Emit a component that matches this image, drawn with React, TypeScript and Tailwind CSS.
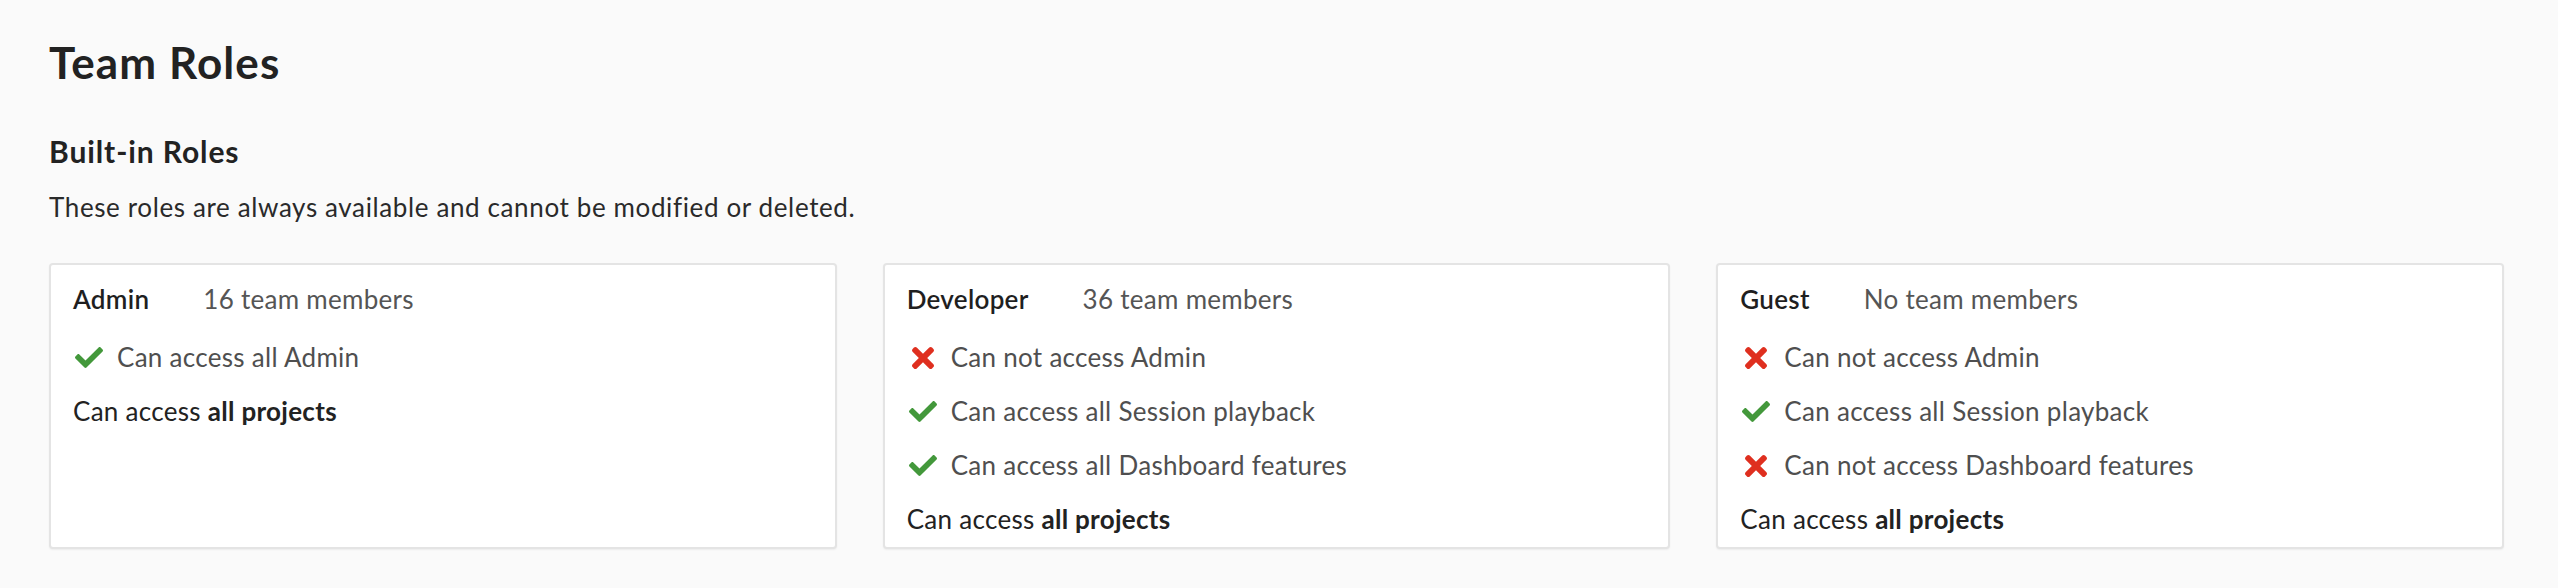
import React from "react";

type Perm = { ok: boolean; text: string };

type Role = {
	name: string;
	members: string;
	perms: Perm[];
};

const roles: Role[] = [
	{
		name: "Admin",
		members: "16 team members",
		perms: [{ ok: true, text: "Can access all Admin" }],
	},
	{
		name: "Developer",
		members: "36 team members",
		perms: [
			{ ok: false, text: "Can not access Admin" },
			{ ok: true, text: "Can access all Session playback" },
			{ ok: true, text: "Can access all Dashboard features" },
		],
	},
	{
		name: "Guest",
		members: "No team members",
		perms: [
			{ ok: false, text: "Can not access Admin" },
			{ ok: true, text: "Can access all Session playback" },
			{ ok: false, text: "Can not access Dashboard features" },
		],
	},
];

function CheckIcon() {
	return (
		<svg width="28" height="21" viewBox="0 72 512 368" className="text-[#43983b]" fill="currentColor">
			<path d="M173.898 439.404l-166.4-166.4c-9.997-9.997-9.997-26.206 0-36.204l36.203-36.204c9.997-9.998 26.207-9.998 36.204 0L192 312.69 432.095 72.596c9.997-9.997 26.207-9.997 36.204 0l36.203 36.204c9.997 9.997 9.997 26.206 0 36.204l-294.4 294.401c-9.998 9.997-26.207 9.997-36.204-.001z" />
		</svg>
	);
}

function CrossIcon() {
	return (
		<svg width="22" height="22" viewBox="0 80 352 352" className="text-[#df2f1f]" fill="currentColor">
			<path d="M242.72 256l100.07-100.07c12.28-12.28 12.28-32.19 0-44.48l-22.24-22.24c-12.28-12.28-32.19-12.28-44.48 0L176 189.28 75.93 89.21c-12.28-12.28-32.19-12.28-44.48 0L9.21 111.45c-12.28 12.28-12.28 32.19 0 44.48L109.28 256 9.21 356.07c-12.28 12.28-12.28 32.19 0 44.48l22.24 22.24c12.28 12.28 32.2 12.28 44.48 0L176 322.72l100.07 100.07c12.28 12.28 32.2 12.28 44.48 0l22.24-22.24c12.28-12.28 12.28-32.19 0-44.48L242.72 256z" />
		</svg>
	);
}

function RoleCard({ role }: { role: Role }) {
	return (
		<div className="rounded-[4px] border-2 border-[#e4e4e4] bg-white px-[22px] pt-[16px] shadow-[0_1px_2px_rgba(0,0,0,0.06)]">
			<div className="flex items-baseline leading-[36px]">
				<span className="text-[26px] font-semibold text-[#1f1f1f]">{role.name}</span>
				<span className="ml-[54px] text-[26px] text-[#555555]">{role.members}</span>
			</div>
			<ul className="mt-[14px]">
				{role.perms.map((p, i) => (
					<li key={i} className="flex items-center h-[54px] text-[26px] text-[#4f4f4f]">
						<span className="w-[30px] flex justify-center shrink-0 ml-[1px]">
							{p.ok ? <CheckIcon /> : <CrossIcon />}
						</span>
						<span className="ml-[13px]">{p.text}</span>
					</li>
				))}
				<li className="flex items-center h-[54px] text-[26px] text-[#222222]">
					<span>
						Can access <span className="font-bold">all projects</span>
					</span>
				</li>
			</ul>
		</div>
	);
}

export default function App() {
	return (
		<main
			className="min-h-[588px] bg-[#fafafa] pl-[49px] pr-[54px] pt-[36px] tracking-[0.018em]"
			style={{ fontFamily: "Lato, 'Open Sans', sans-serif" }}
		>
			<h1 className="text-[44px] font-bold leading-[1.2] tracking-[0.025em] text-[#222222]">Team Roles</h1>

			<h2 className="mt-[44px] text-[30px] font-bold leading-[1.2] tracking-[0.03em] text-[#222222]">Built-in Roles</h2>
			<p className="mt-[23px] text-[26px] leading-[1.2] tracking-[0.024em] text-[#2a2a2a]">
				These roles are always available and cannot be modified or deleted.
			</p>

			{/* Role cards */}
			<div className="mt-[40px] grid grid-cols-3 gap-[46px]">
				{roles.map((r) => (
					<RoleCard key={r.name} role={r} />
				))}
			</div>
		</main>
	);
}
